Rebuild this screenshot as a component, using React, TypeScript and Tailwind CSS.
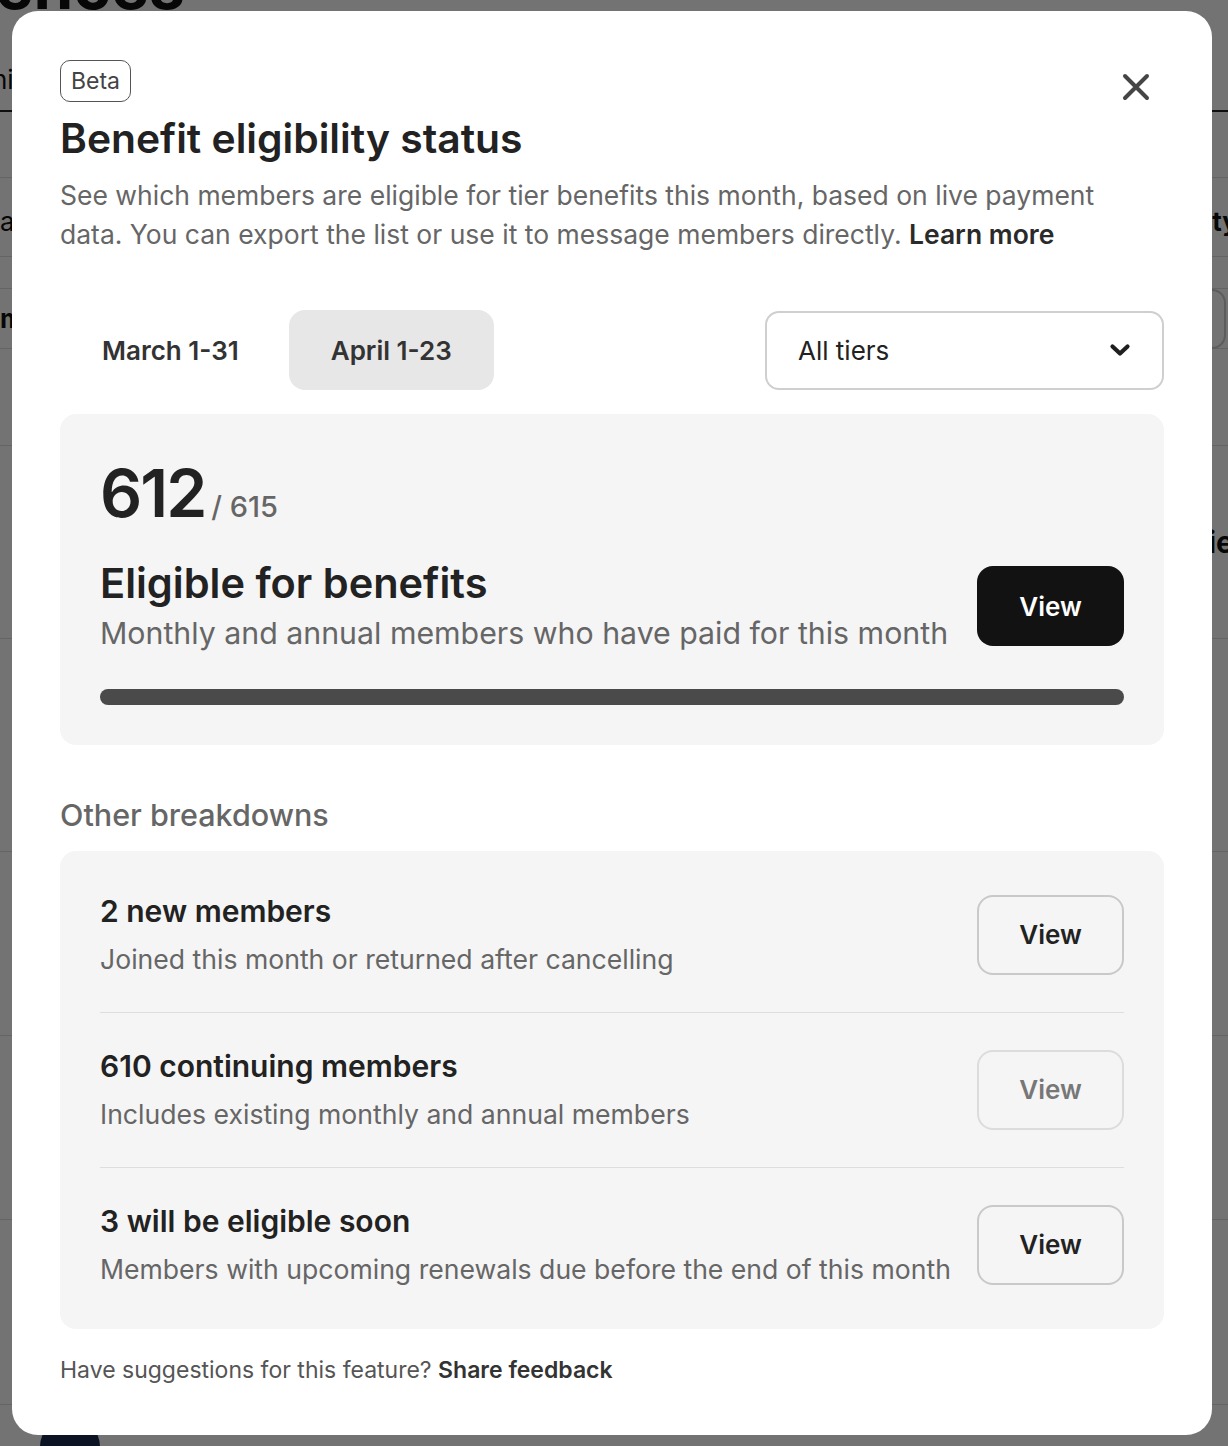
import React from "react";

function XIcon() {
  return (
    <svg width="28" height="28" viewBox="0 0 28 28" fill="none">
      <path d="M3 3L25 25M25 3L3 25" stroke="#454545" strokeWidth="4" strokeLinecap="round" />
    </svg>
  );
}

function Chevron() {
  return (
    <svg width="22" height="14" viewBox="0 0 22 14" fill="none">
      <path d="M3.5 3.5L11 10.5L18.5 3.5" stroke="#1f1f1f" strokeWidth="4.2" strokeLinecap="round" strokeLinejoin="round" />
    </svg>
  );
}

const rows = [
  { title: "2 new members", sub: "Joined this month or returned after cancelling", disabled: false },
  { title: "610 continuing members", sub: "Includes existing monthly and annual members", disabled: true },
  { title: "3 will be eligible soon", sub: "Members with upcoming renewals due before the end of this month", disabled: false },
];

function BackgroundPage() {
  return (
    <div className="h-[1446px] overflow-hidden bg-white text-[#111]">
      <div className="-ml-[150px] -mt-[46px] whitespace-nowrap text-[64px] font-bold leading-none">Audiences</div>
      <div className="mt-[30px] flex flex-col">
        <div className="flex h-[64px] items-center border-b-2 border-[#222] text-[26px]">
          <span className="-ml-[8px]">ni</span>
        </div>
        <div className="h-[66px] border-b border-[#ddd]" />
        <div className="flex h-[79px] items-center justify-between overflow-hidden border-b border-[#ddd] pt-[8px] text-[26px]">
          <span>a</span>
          <span className="-mr-[10px] font-bold">Eligibility</span>
        </div>
        <div className="h-[32px] border-b border-[#ddd]" />
        <div className="flex h-[60px] items-center justify-between border-b border-[#ddd] text-[26px]">
          <span className="font-bold">m</span>
          <span className="mr-[2px] h-[60px] w-[30px] rounded-[14px] border-2 border-[#ccc]" />
        </div>
        <div className="h-[97px] border-b border-[#ddd]" />
        <div className="flex h-[193px] items-start justify-end overflow-hidden border-b border-[#ddd] pt-[74px] text-[30px] font-bold">
          <span className="-mr-[6px]">Tie</span>
        </div>
        <div className="h-[213px] border-b border-[#ddd]" />
        <div className="h-[184px] border-b border-[#ddd]" />
        <div className="h-[184px] border-b border-[#ddd]" />
        <div className="h-[185px] border-b border-[#ddd]" />
        <div className="ml-[40px] mt-[12px] h-[60px] w-[60px] rounded-full bg-[#1c2c4c]" />
      </div>
    </div>
  );
}

export default function App() {
  return (
    <div className="relative min-h-[1446px] font-['Inter',sans-serif]">
      <BackgroundPage />
      <div className="fixed inset-0 flex items-start bg-black/55 pl-[12px] pt-[11px]">
        <div className="flex h-[1424px] w-[1200px] flex-col rounded-[26px] bg-white px-12 pt-[49px]">
          {/* header */}
          <div className="flex items-start justify-between">
            <div className="flex flex-col items-start">
              <span className="inline-flex h-[42px] items-center rounded-[10px] border-[1.5px] border-[#555] px-[10px] text-[23px] text-[#444]">
                Beta
              </span>
              <h1 className="mt-[12px] text-[40.8px] font-semibold leading-[48px] text-[#222]">
                Benefit eligibility status
              </h1>
            </div>
            <button className="mr-[14px] mt-[13px]">
              <XIcon />
            </button>
          </div>
          <p className="mt-[14px] whitespace-nowrap text-[26.5px] leading-[39px] text-[#666]">
            See which members are eligible for tier benefits this month, based on live payment
            <br />
            data. You can export the list or use it to message members directly.{" "}
            <span className="font-semibold text-[#2a2a2a]">Learn more</span>
          </p>

          {/* tabs + select */}
          <div className="mt-[56px] flex items-center">
            <div className="flex gap-[8px]">
              <button className="h-[80px] rounded-[16px] px-[42px] text-[26px] font-semibold text-[#333]">March 1-31</button>
              <button className="h-[80px] rounded-[16px] bg-[#e7e7e7] px-[42px] text-[26px] font-semibold text-[#333]">
                April 1-23
              </button>
            </div>
            <div className="ml-auto flex h-[79px] w-[399px] items-center justify-between rounded-[14px] border-2 border-[#cfcfcf] pl-[31px] pr-[31px] text-[26px] text-[#222]">
              <span>All tiers</span>
              <Chevron />
            </div>
          </div>

          {/* main card */}
          <div className="mt-[24px] rounded-[16px] bg-[#f5f5f5] px-10 pb-10 pt-[46px]">
            <div className="flex items-baseline gap-[6px]">
              <span className="text-[66px] font-semibold leading-none tracking-[-0.03em] text-[#222]">612</span>
              <span className="text-[29px] font-medium text-[#666]">/ 615</span>
            </div>
            <div className="mt-[29px] flex items-center justify-between gap-4">
              <div className="min-w-0 whitespace-nowrap">
                <div className="text-[41.5px] font-semibold leading-[50px] text-[#222]">Eligible for benefits</div>
                <div className="mt-[3px] text-[30.3px] leading-[44px] text-[#666]">
                  Monthly and annual members who have paid for this month
                </div>
              </div>
              <button className="h-[80px] w-[147px] shrink-0 rounded-[16px] bg-[#121212] text-[26px] font-semibold text-white">
                View
              </button>
            </div>
            <div className="mt-[34px] h-[16px] w-full rounded-full bg-[#4a4a4a]" />
          </div>

          <h2 className="mt-[48px] text-[30.5px] font-medium leading-[44px] text-[#666]">Other breakdowns</h2>

          <div className="mt-[14px] rounded-[16px] bg-[#f5f5f5] px-10 py-[7px]">
            {rows.map((r, i) => (
              <div key={r.title} className={i > 0 ? "border-t border-[#dedede]" : ""}>
                <div className="flex items-center justify-between gap-4 py-[33px]">
                  <div className="min-w-0 whitespace-nowrap">
                    <div className="text-[30px] font-semibold leading-[40px] text-[#222]">{r.title}</div>
                    <div className="mt-[9px] text-[26.6px] leading-[39px] text-[#666]">{r.sub}</div>
                  </div>
                  <button
                    className={
                      r.disabled
                        ? "h-[80px] w-[147px] shrink-0 rounded-[16px] border-2 border-[#dcdcdc] text-[26px] font-semibold text-[#777]"
                        : "h-[80px] w-[147px] shrink-0 rounded-[16px] border-2 border-[#c9c9c9] text-[26px] font-semibold text-[#222]"
                    }
                  >
                    View
                  </button>
                </div>
              </div>
            ))}
          </div>

          <p className="mt-[24px] text-[23px] leading-[34px] text-[#555]">
            Have suggestions for this feature? <span className="font-semibold text-[#333]">Share feedback</span>
          </p>
        </div>
      </div>
    </div>
  );
}
